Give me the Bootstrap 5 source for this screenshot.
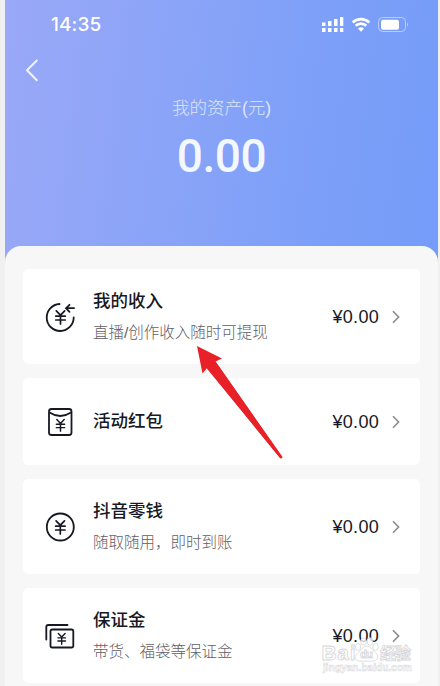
<!DOCTYPE html>
<html lang="zh-CN">
<head>
<meta charset="utf-8">
<meta name="viewport" content="width=device-width, initial-scale=1">
<title>我的资产</title>
<link href="https://cdn.jsdelivr.net/npm/bootstrap@5.3.0/dist/css/bootstrap.min.css" rel="stylesheet">
<style>
body{width:440px;height:686px;background:#f0f0f1;font-family:"Liberation Sans","Noto Sans CJK SC",sans-serif;color:#161823}
.phone{width:433px;height:686px;margin-left:5px;background:linear-gradient(97deg,#9aa8f8 0%,#8aa4f7 35%,#7c9ff9 65%,#719bf8 100%)}
.status{height:50px;padding:0 28px 0 46px}
.clock{font:500 19px/50px Inter,sans-serif;letter-spacing:.1px}
.back{height:40px;padding-left:20px}
.asset-label{height:36px;font-size:17.5px;line-height:36px;font-weight:300;color:#dbe6fd}
.asset-total{height:60px;font:500 46px/60px Roboto,sans-serif;color:#f3f8ff;letter-spacing:-.4px}
.sheet{height:440px;margin-top:60px;border-radius:16px 16px 0 0;background:#f7f7f8;padding:23px 18px 0}
.entry{height:95px;border-radius:5px;padding:0 20px 0 21px;margin-bottom:14px}
.entry.short{height:87px}
.glyph{width:32px;height:32px;margin-right:17px}
.entry-title{font-size:17.5px;line-height:31px;font-weight:500}
.entry-note{font-size:15.5px;line-height:31px;font-weight:300;color:#5f6066}
.amount{font-size:18px;line-height:24px;letter-spacing:.3px;margin-right:13px}
.pointer{left:190px;top:340px}
.brand{left:315px;top:635px}
</style>
<script src="https://cdn.jsdelivr.net/npm/bootstrap@5.3.0/dist/js/bootstrap.bundle.min.js"></script>
</head>
<body class="position-relative overflow-hidden">
<svg width="0" height="0" class="position-absolute">
  <symbol id="yen" viewBox="0 0 12 16"><path d="M1.8 1.8 6 6.2 10.2 1.8M6 6.2V15M1.3 7.2H10.7M1.3 11H10.7" fill="none" stroke="currentColor" stroke-width="1.7" stroke-linecap="round"/></symbol>
  <symbol id="next" viewBox="0 0 8 14"><path d="M1 1.2 6.6 7 1 12.8" fill="none" stroke="#898a90" stroke-width="1.6"/></symbol>
</svg>
<main class="phone overflow-hidden">
  <header class="status d-flex align-items-center text-white">
    <span class="clock me-auto">14:35</span>
    <svg width="90" height="20" viewBox="320 15 90 20" fill="#fff">
      <path d="M322 22.5h3.5V26H322zM328 21h3.5v5H328zM334 19h3.5v7H334zM340 17h3.3v9H340zM322 28h3.5v4H322zM328 28h3.5v4H328zM334 28h3.5v4H334zM340 28h3.3v4H340z"/>
      <path d="M352.7 22.5a12 12 0 0 1 16.6 0M355.7 25.8a7.6 7.6 0 0 1 10.6 0" fill="none" stroke="#fff" stroke-width="2.6"/>
      <path d="M358 28.6a4.3 4.3 0 0 1 6 0L361 31.8z"/>
      <rect x="378.5" y="17.5" width="27" height="14" rx="4" fill="none" stroke="#b9ccff"/>
      <rect x="381" y="19.8" width="18" height="10" rx="2"/>
      <path d="M407 22.5q2 2 0 4.5z" fill="#b9ccff"/>
    </svg>
  </header>
  <div class="back d-flex align-items-center">
    <svg width="14" height="24" viewBox="0 0 14 24"><path d="M11.8 2.5 2 12.2 11.8 22.2" fill="none" stroke="#f0f4ff" stroke-width="2" stroke-linecap="round" stroke-linejoin="round"/></svg>
  </div>
  <div class="asset-label text-center">我的资产(元)</div>
  <div class="asset-total text-center">0.00</div>
  <section class="sheet">
    <div class="entry bg-white d-flex align-items-center">
      <svg class="glyph" viewBox="44 300 32 32" fill="none" stroke="currentColor" stroke-width="1.8" stroke-linecap="round"><path d="M59.5 303A13.5 13.5 0 1 0 73.7 316.5M66.5 307.2H74M69.5 303.8 66 307.2 69.5 310.8"/><use href="#yen" x="54.5" y="308" width="12" height="16" stroke-width="1"/></svg>
      <div class="flex-grow-1"><div class="entry-title">我的收入</div><div class="entry-note">直播/创作收入随时可提现</div></div>
      <span class="amount">¥0.00</span><svg width="8" height="14"><use href="#next"/></svg>
    </div>
    <div class="entry short bg-white d-flex align-items-center">
      <svg class="glyph" viewBox="44 405 32 32" fill="none" stroke="currentColor" stroke-width="1.8"><rect x="49" y="408" width="22.5" height="26" rx="2.5"/><path d="M49.5 411.5Q60.3 418.5 71 411.5"/><use href="#yen" x="55" y="417" width="11" height="14"/></svg>
      <div class="flex-grow-1 entry-title">活动红包</div>
      <span class="amount">¥0.00</span><svg width="8" height="14"><use href="#next"/></svg>
    </div>
    <div class="entry bg-white d-flex align-items-center">
      <svg class="glyph" viewBox="44 510 32 32" fill="none" stroke="currentColor" stroke-width="1.8"><circle cx="60.3" cy="526" r="13.5"/><use href="#yen" x="54.3" y="518" width="12" height="16"/></svg>
      <div class="flex-grow-1"><div class="entry-title">抖音零钱</div><div class="entry-note">随取随用，即时到账</div></div>
      <span class="amount">¥0.00</span><svg width="8" height="14"><use href="#next"/></svg>
    </div>
    <div class="entry bg-white d-flex align-items-center">
      <svg class="glyph" viewBox="44 619 32 32" fill="none" stroke="currentColor" stroke-width="1.8" stroke-linecap="round"><path d="M46.3 638.5V626Q46.3 624 48.3 624H67.5"/><rect x="50.5" y="628.5" width="22.8" height="18" rx="1.8"/><use href="#yen" x="56.7" y="631" width="10" height="13"/></svg>
      <div class="flex-grow-1"><div class="entry-title">保证金</div><div class="entry-note">带货、福袋等保证金</div></div>
      <span class="amount">¥0.00</span><svg width="8" height="14"><use href="#next"/></svg>
    </div>
  </section>
</main>
<svg class="pointer position-absolute" width="100" height="125" viewBox="190 340 100 125"><path d="M197 346 222 358.5 215.5 361.5 282.5 457.5 280.5 458.5 207 368 202.5 373.5z" fill="#e82027"/><path d="M215.5 361.5 282.5 457Q282 459 280 458L206.5 368" fill="#e82027"/></svg>
<svg class="brand position-absolute" width="105" height="40" viewBox="315 635 105 40" fill="#fff" stroke="#d5d5d8" stroke-width=".8" font-family="Liberation Sans, Noto Sans CJK SC, sans-serif" font-weight="700">
  <text x="321.500" y="660" font-size="21" textLength="34">Bai</text>
  <g fill-opacity=".75"><ellipse cx="358" cy="647" rx="2.700" ry="3.500"/><ellipse cx="363.500" cy="641.500" rx="2.800" ry="3.700"/><ellipse cx="370" cy="641.500" rx="2.800" ry="3.700"/><ellipse cx="375.500" cy="647" rx="2.700" ry="3.500"/><path d="M361 650Q366.500 642 373 650C377 654 379 656 377 659Q375 662 366 661Q357 662 355.500 659C354 656 358 653 361 650z"/></g>
  <text x="360" y="658" font-size="11.500" textLength="13">du</text>
  <text x="380" y="659" font-size="16" textLength="31">经验</text>
  <text x="323" y="671" font-size="10" stroke-width=".5" textLength="89">jingyan.baidu.com</text>
</svg>
</body>
</html>
